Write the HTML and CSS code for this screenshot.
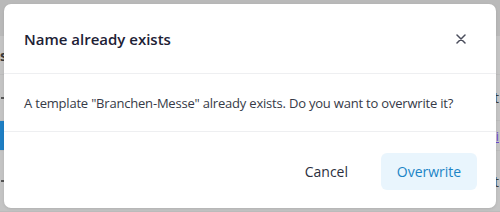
FILE: index.html
```html
<!DOCTYPE html>
<html lang="en">
<head>
    <meta charset="UTF-8">
    <meta name="viewport" content="width=device-width, initial-scale=1.0">
    <title>Name already exists</title>
    <link rel="stylesheet" href="styles.css">
</head>
<body>

<!-- page behind the overlay -->
<div class="pagina">
    <div class="barra-top"></div>
    <div class="fila fila-1"><span class="letra">s</span></div>
    <div class="fila fila-2"><span class="punto"></span><span class="letra-der">t</span></div>
    <div class="fila fila-activa"><span class="marca"></span><span class="enlace">i</span></div>
    <div class="fila fila-4"><span class="punto"></span><span class="letra-der">t</span></div>
</div>

<div class="fondo">
    <div class="dialogo">
        <div class="dialogo-cabecera">
            <h2>Name already exists</h2>
            <button class="cerrar" aria-label="Close">
                <svg width="10" height="10" viewBox="0 0 10 10">
                    <path d="M1 1L9 9M9 1L1 9" stroke="#4a4d5c" stroke-width="1.5" stroke-linecap="round"/>
                </svg>
            </button>
        </div>
        <div class="dialogo-cuerpo">
            A template "Branchen-Messe" already exists. Do you want to overwrite it?
        </div>
        <div class="dialogo-pie">
            <button class="btn-cancelar">Cancel</button>
            <button class="btn-sobrescribir">Overwrite</button>
        </div>
    </div>
</div>

</body>
</html>
```

FILE: styles.css
```css
body {
    font-family: "Open Sans", Arial, sans-serif;
    margin: 0;
    width: 500px;
    height: 212px;
    overflow: hidden;
    background: #c4c4c4;
    position: relative;
}

.pagina {
    height: 212px;
}

.barra-top {
    height: 36px;
    background: #b9b9b9;
}

.fila {
    border-bottom: 1px solid #bcbcbc;
    display: flex;
    justify-content: space-between;
    align-items: center;
}

.fila-1 { height: 38px; }
.fila-2 { height: 45px; }
.fila-4 { height: 60px; }

.letra {
    font-weight: bold;
    color: #3a3a3a;
    font-size: 14px;
}

.letra-der {
    color: #3a3a3a;
    font-size: 14px;
    margin-left: auto;
    margin-right: 1px;
}

.fila-activa {
    height: 29px;
}

.fila-activa .marca {
    width: 4px;
    height: 29px;
    background: #1f7fc4;
}

.enlace {
    color: #6a4ad0;
    text-decoration: underline;
    font-size: 13px;
    margin-right: 1px;
}

.punto {
    width: 3px;
    height: 2px;
    background: #555;
    margin-left: 1px;
}

/* overlay */
.fondo {
    position: absolute;
    top: 0;
    left: 0;
    right: 0;
    bottom: 0;
    padding: 4px;
}

.dialogo {
    background: white;
    border-radius: 7px;
    height: 204px;
    display: flex;
    flex-direction: column;
    box-shadow: 0 1px 3px rgba(0,0,0,0.1);
}

.dialogo-cabecera {
    height: 69px;
    display: flex;
    align-items: center;
    justify-content: space-between;
    padding: 0 30px 0 20px;
    border-bottom: 1px solid #eeeff1;
}

.dialogo-cabecera h2 {
    margin: 0;
    font-size: 15px;
    font-weight: 600;
    color: #1d2135;
}

.cerrar {
    background: none;
    border: none;
    padding: 0;
    display: flex;
    cursor: pointer;
}

.dialogo-cuerpo {
    height: 57px;
    display: flex;
    align-items: center;
    padding: 0 20px;
    font-size: 13px;
    letter-spacing: -0.2px;
    white-space: nowrap;
    color: #363a47;
    border-bottom: 1px solid #eeeff1;
}

.dialogo-pie {
    flex: 1;
    display: flex;
    justify-content: flex-end;
    align-items: center;
    gap: 11px;
    padding: 2px 19px 0 0;
}

.btn-cancelar,
.btn-sobrescribir {
    font-family: inherit;
    font-size: 14px;
    font-weight: 500;
    border: none;
    border-radius: 6px;
    height: 37px;
    cursor: pointer;
}

.btn-cancelar {
    background: none;
    color: #2b2f3d;
    padding: 0 22px;
}

.btn-sobrescribir {
    background: #e9f5fd;
    color: #1b84c6;
    width: 96px;
    padding: 0;
}
```
